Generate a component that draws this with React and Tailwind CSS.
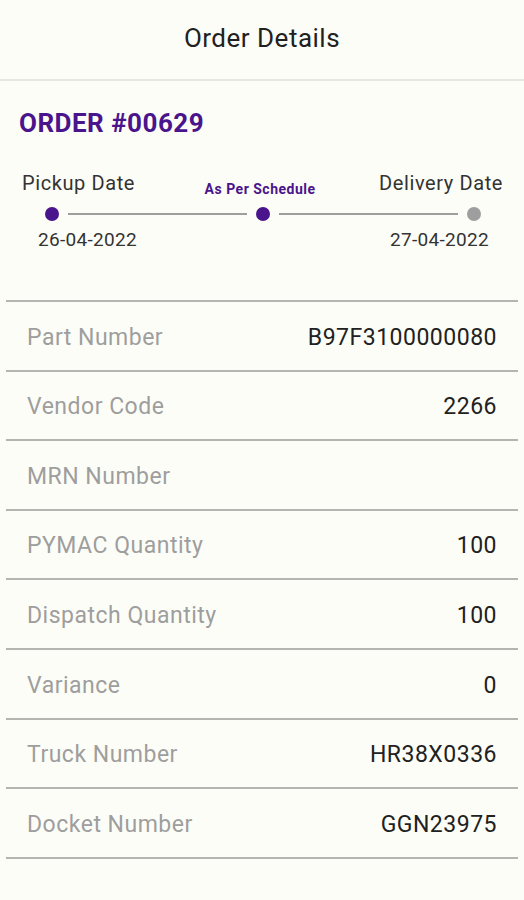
export default function App() {
  const rows = [
    ['Part Number', 'B97F3100000080'],
    ['Vendor Code', '2266'],
    ['MRN Number', ''],
    ['PYMAC Quantity', '100'],
    ['Dispatch Quantity', '100'],
    ['Variance', '0'],
    ['Truck Number', 'HR38X0336'],
    ['Docket Number', 'GGN23975'],
  ];

  return (
    <div
      className="w-[524px] h-[900px] bg-[#fdfdf7] text-[#1f1f1f]"
      style={{ fontFamily: 'Roboto, "Noto Sans", sans-serif' }}
    >
      {/* Header */}
      <div className="h-[81px] flex items-center justify-center border-b-2 border-[#e6e6e2] pb-[3px]">
        <h1 className="text-[26px] tracking-[0.5px] text-[#212121]">Order Details</h1>
      </div>

      {/* Order title */}
      <div className="pl-[19px] pt-[26px]">
        <h2 className="text-[26px] tracking-[0.5px] font-bold text-[#4a148c] leading-[32px]">ORDER #00629</h2>
      </div>

      {/* Timeline */}
      <div className="mt-[32px]">
        <div className="flex items-end justify-between pl-[22px] pr-[21px] h-[22px]">
          <span className="text-[20px] tracking-[0.6px] leading-[20px] text-[#333]">Pickup Date</span>
          <span className="text-[14px] tracking-[0.5px] font-bold leading-[14px] text-[#4a148c] ml-[6px] mb-[-3px]">As Per Schedule</span>
          <span className="text-[20px] tracking-[0.6px] leading-[20px] text-[#333]">Delivery Date</span>
        </div>
        <div className="flex items-center pl-[45px] pr-[43px] mt-[14px] h-[14px]">
          <span className="w-[14px] h-[14px] rounded-full bg-[#4a148c]" />
          <span className="flex-1 h-[2px] bg-[#9e9e9e] mx-[9px]" />
          <span className="w-[14px] h-[14px] rounded-full bg-[#4a148c]" />
          <span className="flex-1 h-[2px] bg-[#9e9e9e] mx-[9px]" />
          <span className="w-[14px] h-[14px] rounded-full bg-[#9e9e9e]" />
        </div>
        <div className="flex justify-between pl-[38px] pr-[35px] mt-[9px]">
          <span className="text-[19px] tracking-[0.3px] leading-[20px] text-[#333]">26-04-2022</span>
          <span className="text-[19px] tracking-[0.3px] leading-[20px] text-[#333]">27-04-2022</span>
        </div>
      </div>

      {/* Details table */}
      <div className="mx-[6px] mt-[50px] border-t-2 border-[#b4b4b0]">
        {rows.map(([label, value]) => (
          <div
            key={label}
            className="h-[69.6px] flex items-center justify-between pl-[21px] pr-[21px] pt-[4px] border-b-2 border-[#b4b4b0]"
          >
            <span className="text-[23px] tracking-[0.5px] text-[#9e9e9e]">{label}</span>
            <span className="text-[23px] tracking-[0.5px] text-[#212121]">{value}</span>
          </div>
        ))}
      </div>
    </div>
  );
}
